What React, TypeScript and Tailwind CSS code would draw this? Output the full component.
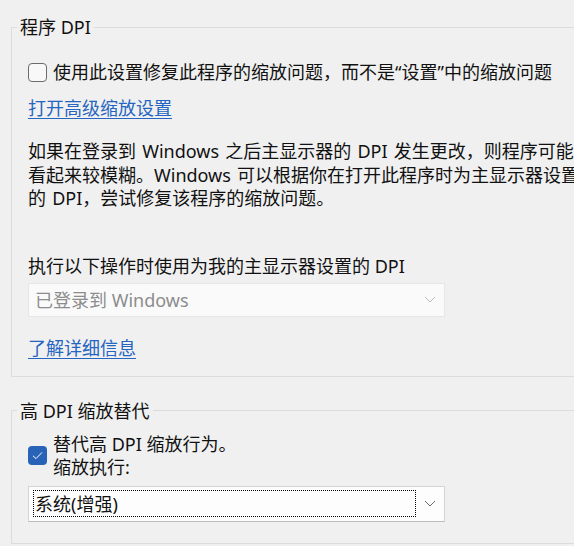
import React from "react";

const FONT = {
  fontFamily: '"Noto Sans", "Noto Sans CJK SC", sans-serif',
};

function Chevron({ color }: { color: string }) {
  return (
    <svg width="12" height="7" viewBox="0 0 12 7" fill="none">
      <path d="M1 1 L6 6 L11 1" stroke={color} strokeWidth="1" />
    </svg>
  );
}

export default function App() {
  return (
    <div
      className="w-[574px] h-[546px] overflow-hidden bg-[#f0f0f0] pl-[11px] text-[18px] text-[#111111]"
      style={FONT}
    >
      <fieldset className="mt-[17px] w-[640px] border border-[#dcdcdc] p-0 m-0">
        <legend className="ml-[5px] px-[3px] leading-[20px]">程序 DPI</legend>
        <div className="pl-[16px] pt-[23px] pb-[16px]">
          <div className="flex items-center h-[24px] leading-[24px]">
            <span className="w-[19px] h-[19px] rounded-[4px] border border-[#6b6b6b] bg-[#f8f8f8] shrink-0" />
            <span className="ml-[6px] whitespace-nowrap">
              使用此设置修复此程序的缩放问题，而不是“设置”中的缩放问题
            </span>
          </div>
          <div className="mt-[12px] leading-[24px]">
            <a className="text-[#2465c2] underline underline-offset-[3px] decoration-1">
              打开高级缩放设置
            </a>
          </div>
          <p className="mt-[20px] leading-[23.5px] whitespace-nowrap [word-spacing:1.5px]">
            如果在登录到 Windows 之后主显示器的 DPI 发生更改，则程序可能会
            <br />
            看起来较模糊。Windows 可以根据你在打开此程序时为主显示器设置
            <br />
            的 DPI，尝试修复该程序的缩放问题。
          </p>
          <div className="mt-[43px] leading-[24px] whitespace-nowrap">
            执行以下操作时使用为我的主显示器设置的 DPI
          </div>
          <div className="mt-[5px] w-[417px] h-[34px] border border-[#e6e6e6] bg-[#fafafa] flex items-center justify-between pl-[6px] pr-[8px]">
            <span className="text-[#8d8d8d] leading-[24px]">已登录到 Windows</span>
            <Chevron color="#bdbdbd" />
          </div>
          <div className="mt-[19px] leading-[24px]">
            <a className="text-[#2465c2] underline underline-offset-[3px] decoration-1">
              了解详细信息
            </a>
          </div>
        </div>
      </fieldset>

      <fieldset className="mt-[24px] w-[640px] border border-[#dcdcdc] p-0 m-0">
        <legend className="ml-[5px] px-[3px] leading-[20px]">高 DPI 缩放替代</legend>
        <div className="pl-[16px] pt-[12px] pb-[21px]">
          <div className="flex items-center">
            <span className="w-[19px] h-[19px] rounded-[4px] bg-[#2863b7] shrink-0 flex items-center justify-center">
              <svg width="11" height="9" viewBox="0 0 11 9" fill="none">
                <path d="M1 4.8 L4 7.6 L10 1.4" stroke="#ffffff" strokeWidth="1" />
              </svg>
            </span>
            <div className="ml-[6px] leading-[23px] whitespace-nowrap">
              <div>替代高 DPI 缩放行为。</div>
              <div>缩放执行:</div>
            </div>
          </div>
          <div className="mt-[7px] w-[417px] h-[36px] border border-[#d4d4d4] border-b-[#bcbcbc] bg-[#fdfdfd] flex items-center pl-[4px] pr-[8px]">
            <div className="w-[383px] h-[27px] border border-dotted border-black flex items-center pl-[1px]">
              <span className="leading-[24px]">系统(增强)</span>
            </div>
            <div className="ml-auto">
              <Chevron color="#6a6a6a" />
            </div>
          </div>
        </div>
      </fieldset>
    </div>
  );
}
